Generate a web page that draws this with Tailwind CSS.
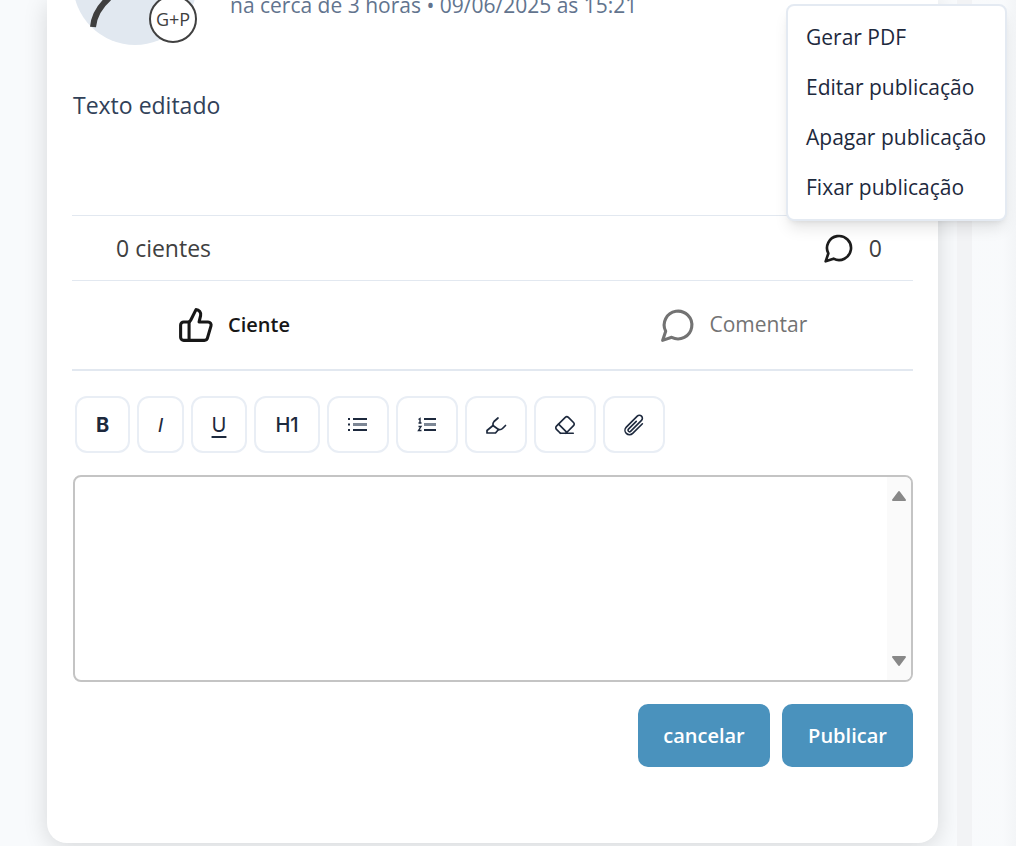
<!DOCTYPE html>
<html lang="pt-BR">
<head>
  <meta charset="UTF-8" />
  <meta name="viewport" content="width=device-width, initial-scale=1.0" />
  <title>Publicação</title>
  <script src="https://cdn.jsdelivr.net/npm/@tailwindcss/browser@4"></script>
</head>
<body class="bg-slate-50 font-['Open_Sans','Noto_Sans',sans-serif] text-slate-800 overflow-hidden">
  <div class="flex min-h-screen">

    <!-- Post card -->
    <main class="flex-1 ml-[47px] mb-[3px] px-[25px] bg-white rounded-b-[20px] shadow-[0_4px_24px_rgba(0,0,0,0.14)]">

      <!-- Author -->
      <header class="flex items-end h-[45px] overflow-hidden">
        <div class="relative shrink-0 ml-px w-[124px] h-[124px]">
          <svg class="w-full h-full" viewBox="0 0 124 124" fill="none">
            <circle cx="62" cy="62" r="62" fill="#e1e8f0" />
            <path d="M20 106C21 95 27 85 36 77" stroke="#3f3f3f" stroke-width="6" />
          </svg>
          <span class="absolute right-0 bottom-0.5 flex items-center justify-center w-12 h-12 rounded-full border-2 border-neutral-700 bg-white font-['Open_Sans',sans-serif] text-lg text-neutral-700">G+P</span>
        </div>
        <p class="ml-[33px] mb-[25px] text-[21px] leading-[30px] whitespace-nowrap text-slate-500">na cerca de 3 horas • 09/06/2025 às 15:21</p>
      </header>

      <p class="h-[170px] pt-[44px] pl-px text-[23px] leading-8 text-slate-700">Texto editado</p>

      <!-- Counters -->
      <div class="flex items-center justify-between h-[65px] pl-11 pr-[31px] border-t border-slate-200 text-[23px] text-neutral-700">
        <span>0 cientes</span>
        <span class="flex items-center gap-[14px]">
          <svg class="w-8 h-8" viewBox="0 0 24 24" fill="none" stroke="#1c1c1c" stroke-width="2" stroke-linecap="round" stroke-linejoin="round">
            <path d="M7.900 20A9 9 0 1 0 4 16.100L2 22Z" />
          </svg>
          0
        </span>
      </div>

      <!-- Actions -->
      <div class="grid grid-cols-2 h-[91px] pl-3 border-t border-b-2 border-slate-200">
        <button class="flex items-center gap-3 pl-[92px] text-xl font-semibold text-neutral-900">
          <svg class="w-10 h-10" viewBox="-1 -1 26 26" fill="none" stroke="currentColor" stroke-width="2" stroke-linecap="round" stroke-linejoin="round">
            <path d="M7.500 10v12" />
            <path d="M15 5.880 14 10h5.830a2 2 0 0 1 1.920 2.560l-2.330 8A2 2 0 0 1 17.500 22H4a2 2 0 0 1-2-2v-8a2 2 0 0 1 2-2h2.760a2 2 0 0 0 1.790-1.110L12 2a3.130 3.130 0 0 1 3 3.880Z" />
          </svg>
          Ciente
        </button>
        <button class="flex items-center gap-3 pl-[159px] text-[21px] font-medium text-neutral-500">
          <svg class="w-10 h-10" viewBox="-1 -1 26 26" fill="none" stroke="currentColor" stroke-width="2" stroke-linecap="round" stroke-linejoin="round">
            <path d="M7.900 20A9 9 0 1 0 4 16.100L2 22Z" />
          </svg>
          Comentar
        </button>
      </div>

      <!-- Editor toolbar -->
      <div class="flex gap-[7px] mt-[25px] ml-[3px] h-[57px] font-[Inter,sans-serif] text-xl text-slate-800">
        <button aria-label="Negrito" class="w-[55px] border-2 border-[#e9eef5] rounded-xl font-bold">B</button>
        <button aria-label="Itálico" class="w-[47px] border-2 border-[#e9eef5] rounded-xl font-['Liberation_Sans',sans-serif] font-medium italic">I</button>
        <button aria-label="Sublinhado" class="w-[56px] border-2 border-[#e9eef5] rounded-xl underline underline-offset-4">U</button>
        <button aria-label="Título" class="w-[66px] border-2 border-[#e9eef5] rounded-xl font-medium">H1</button>
        <button aria-label="Lista" class="flex items-center justify-center w-[62px] border-2 border-[#e9eef5] rounded-xl">
          <svg class="w-5 h-5" viewBox="0 0 20 20" fill="none" stroke="currentColor" stroke-width="2">
            <path d="M5 4H19M5 15H19M0 4H2M0 9.500H2M0 15H2" />
            <path d="M5 9.500H19" stroke="#7d8795" stroke-width="3" />
          </svg>
        </button>
        <button aria-label="Lista numerada" class="flex items-center justify-center w-[62px] border-2 border-[#e9eef5] rounded-xl">
          <svg class="w-5 h-5" viewBox="0 0 20 20" fill="none" stroke="currentColor" stroke-width="2">
            <path d="M7 4H19M7 15H19" />
            <path d="M7 9.500H19" stroke="#7d8795" stroke-width="3" />
            <path d="M1.500 4.500 3 3.500V8M1.500 8H4.500M1.500 11.500H4L1.500 15.500H4.500" stroke-width="1.400" />
          </svg>
        </button>
        <button aria-label="Marcador" class="flex items-center justify-center w-[62px] border-2 border-[#e9eef5] rounded-xl">
          <svg class="w-[22px] h-[22px]" viewBox="0 0 22 22" fill="none" stroke="currentColor" stroke-width="1.700" stroke-linecap="round" stroke-linejoin="round">
            <path d="M13 4 9 7.500Q7.500 9 8 11.500L2 16.500V19H10.500L13.500 15.500Q16 16 17.500 14.500L20.500 11.500" />
            <path d="M8 11.500 13.500 15.500" />
          </svg>
        </button>
        <button aria-label="Limpar formatação" class="flex items-center justify-center w-[62px] border-2 border-[#e9eef5] rounded-xl">
          <svg class="w-[22px] h-[22px]" viewBox="0 0 24 24" fill="none" stroke="currentColor" stroke-width="1.800" stroke-linecap="round" stroke-linejoin="round">
            <path d="M7 21 2.700 16.700C1.700 15.700 1.700 14.300 2.700 13.300L12.300 3.700C13.300 2.700 14.700 2.700 15.700 3.700L21.300 9.300C22.300 10.300 22.300 11.700 21.300 12.700L13 21" />
            <path d="M21 21H7M5 11 14 20" />
          </svg>
        </button>
        <button aria-label="Anexar" class="flex items-center justify-center w-[62px] border-2 border-[#e9eef5] rounded-xl">
          <svg class="w-6 h-6" viewBox="0 0 24 24" fill="none" stroke="currentColor" stroke-width="1.600" stroke-linecap="round" stroke-linejoin="round">
            <path d="m20.400 10.739-9.718 9.693a4.500 4.500 0 0 1-6.364-6.364l10.940-10.940A3 3 0 1 1 19.500 7.372L8.552 18.320m5.698-9.941-7.810 7.810a1.500 1.500 0 0 0 2.112 2.130" />
          </svg>
        </button>
      </div>

      <!-- Comment box -->
      <div class="flex mt-[22px] ml-px h-[207px] border-2 border-[#c4c4c4] rounded-lg overflow-hidden">
        <textarea aria-label="Comentário" class="flex-1 p-3 resize-none outline-none text-xl"></textarea>
        <div class="flex flex-col justify-between items-center w-6 py-[13px] bg-neutral-50">
          <svg class="w-4 h-3" viewBox="0 0 16 12"><path d="M8 2 14 10H2Z" fill="#888" stroke="#888" stroke-width="2" stroke-linejoin="round" /></svg>
          <svg class="w-4 h-3" viewBox="0 0 16 12"><path d="M8 10 14 2H2Z" fill="#888" stroke="#888" stroke-width="2" stroke-linejoin="round" /></svg>
        </div>
      </div>

      <div class="flex justify-end gap-3 mt-[22px] text-xl font-semibold text-white">
        <button class="h-[63px] w-[132px] rounded-[10px] bg-[#4a92bd]">cancelar</button>
        <button class="h-[63px] w-[131px] rounded-[10px] bg-[#4a92bd]">Publicar</button>
      </div>
    </main>

    <!-- Feed scroll track and side column -->
    <div class="ml-[19px] w-[15px] bg-[#f2f3f5]"></div>
    <div class="w-11 bg-linear-to-r from-slate-50 from-70% to-[#f3f5f7]"></div>
  </div>

  <!-- Post menu -->
  <nav class="absolute top-1 right-[9px] w-[221px] pt-[7px] pb-[6px] flex flex-col bg-white border-2 border-[#e4eaf2] rounded-lg shadow-lg text-[21px] text-slate-800">
    <button class="px-[18px] h-[50px] text-left whitespace-nowrap">Gerar PDF</button>
    <button class="px-[18px] h-[50px] text-left whitespace-nowrap">Editar publicação</button>
    <button class="px-[18px] h-[50px] text-left whitespace-nowrap">Apagar publicação</button>
    <button class="px-[18px] h-[50px] text-left whitespace-nowrap">Fixar publicação</button>
  </nav>
</body>
</html>
